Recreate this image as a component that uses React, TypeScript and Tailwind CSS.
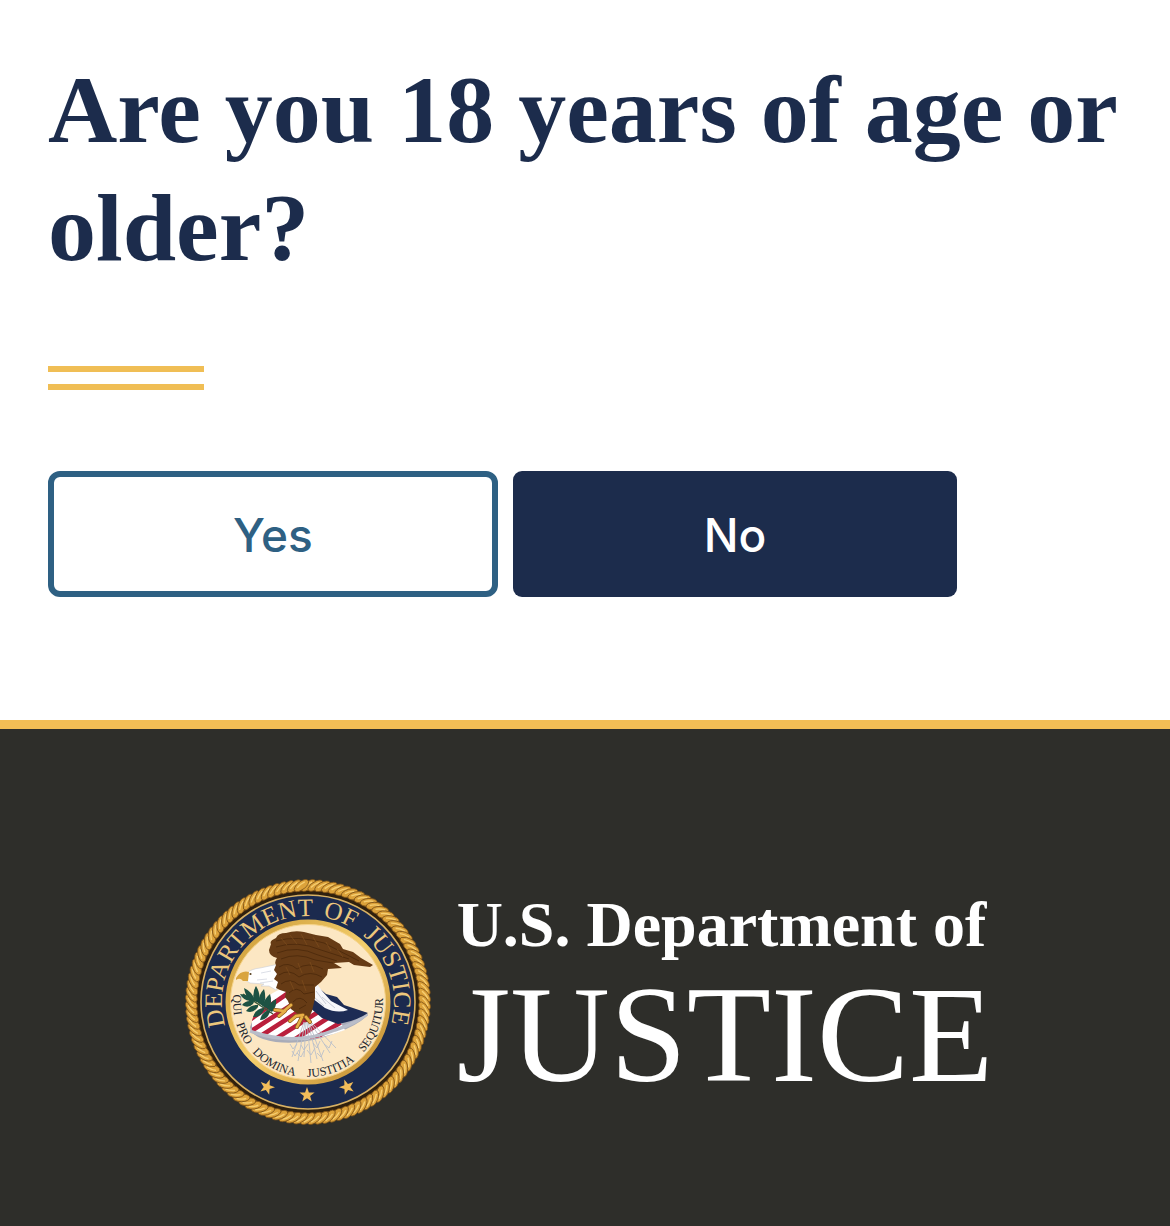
const ropeStrands = Array.from({ length: 104 }, (_, i) => (i * 360) / 104)

const nameWords = [
  { text: 'DEPARTMENT', offset: '0.8%' },
  { text: 'OF', offset: '54.6%' },
  { text: 'JUSTICE', offset: '68.4%' },
]

const mottoWords = [
  { text: 'QUI', offset: '9.4%' },
  { text: 'PRO', offset: '20.4%' },
  { text: 'DOMINA', offset: '36.6%' },
  { text: 'JUSTITIA', offset: '58.8%' },
  { text: 'SEQUITUR', offset: '82.6%' },
]

const stars = [
  { x: 82, y: 208, turn: 20 },
  { x: 122, y: 216, turn: 0 },
  { x: 162, y: 208, turn: -20 },
]

const leaves = [
  'M66 124 Q60 116 59 109 Q68 113 70 122Z',
  'M69 122 Q67 113 71 107 Q76 115 74 124Z',
  'M73 124 Q74 115 79 110 Q82 119 78 127Z',
  'M77 127 Q80 119 85 115 Q88 124 83 130Z',
  'M82 130 Q85 123 91 120 Q92 128 87 133Z',
  'M65 122 Q58 121 55 115 Q63 115 68 121Z',
  'M68 125 Q63 130 57 126 Q62 120 69 123Z',
  'M73 128 Q68 135 61 132 Q66 125 73 126Z',
  'M79 131 Q75 139 68 138 Q71 129 79 129Z',
  'M85 133 Q82 141 75 141 Q77 132 85 131Z',
]

const talons =
  'M106 126 L99 132 L90 131 M100 132 L94 137 M118 136 L111 137 L105 142 M117 138 L112 148 M121 138 L125 143'

function Seal() {
  return (
    <svg viewBox="0 0 246 246" role="img" aria-label="Department of Justice seal" className="w-[246px] shrink-0">
      <defs>
        <path id="name-arc" d="M41.1 149.2 A86 86 0 1 1 204.9 149.2" />
        <path id="motto-arc" d="M51.7 99.8 A75 75 0 1 0 194.3 99.8" />
        <linearGradient id="gold" x1="0" y1="0" x2="1" y2="1">
          <stop offset="0" stopColor="#c99733" />
          <stop offset="0.5" stopColor="#f4ce6c" />
          <stop offset="1" stopColor="#bd862b" />
        </linearGradient>
        <clipPath id="shield">
          <path d="M67 141 Q77 116 97 110 L131 110 L154 141 L160 151 Q112 170 67 152Z" />
        </clipPath>
      </defs>

      {/* Rope border */}
      <circle cx="123" cy="123" r="116" fill="#2f200e" stroke="#6b4617" strokeWidth="10" />
      {ropeStrands.map((angle) => (
        <g key={angle} transform={`rotate(${angle} 123 123)`}>
          <path d="M116 10 Q117 5 124 1.5 Q130 -1 131 3 Q130 8 123 11 Q117 14 116 10Z" fill="#dca23a" stroke="#7d5218" strokeWidth="0.8" />
          <path d="M119 8.5 Q122 5 127 3" fill="none" stroke="#f5cd70" strokeWidth="1.4" />
        </g>
      ))}

      {/* Rings */}
      <circle cx="123" cy="123" r="107" fill="#1b2a4e" stroke="#d8b163" strokeWidth="1.6" />
      <circle cx="123" cy="123" r="80" fill="#fce7c3" stroke="url(#gold)" strokeWidth="5" />
      <circle cx="123" cy="123" r="77.5" fill="none" stroke="#f7d48b" strokeWidth="1" />

      {nameWords.map(({ text, offset }) => (
        <text key={text} fill="#ecc77c" className="font-['Liberation_Serif',serif] text-[25px]">
          <textPath href="#name-arc" startOffset={offset}>{text}</textPath>
        </text>
      ))}
      {mottoWords.map(({ text, offset }) => (
        <text key={text} fill="#20242c" textAnchor="middle" className="font-['Liberation_Serif',serif] text-[12px]">
          <textPath href="#motto-arc" startOffset={offset}>{text}</textPath>
        </text>
      ))}

      {stars.map(({ x, y, turn }) => (
        <path
          key={x}
          transform={`translate(${x} ${y}) rotate(${turn})`}
          d="M0 -8 L1.9 -2.5 L7.6 -2.5 L3.1 1 L4.7 6.5 L0 3.2 L-4.7 6.5 L-3.1 1 L-7.6 -2.5 L-1.9 -2.5Z"
          fill="#f2bd5a"
        />
      ))}

      {/* Shield */}
      <path d="M65 148 Q66 156 78 160 Q110 170 151 154 Q172 147 183 136 L181 133 Q130 150 67 143Z" fill="#a9acb8" />
      <g clipPath="url(#shield)">
        <path d="M60 100 H165 V165 H60Z" fill="#fff" />
        <path d="M60 144 L112 108 M60 156 L122 116 M68 162 L130 122 M84 164 L138 130 M101 166 L146 137 M119 166 L158 142" stroke="#ba1f3c" strokeWidth="4.6" />
      </g>
      <path d="M65 152 Q108 168 150 151 Q170 145 182 135" fill="none" stroke="#b9bdc9" strokeWidth="3.4" />
      <path d="M128 104 L141 115 L152 118 L159 126 L183 134 Q171 142 153 145 L137 139 L124 128Z" fill="#1d2c55" />
      <path d="M129 101 L138 113 L146 122 L163 131 Q152 135 140 129 L127 119 L125 108Z" fill="#f7f7fa" />
      <path d="M131 112 L141 125 M137 118 L150 129 M129 118 L139 127" stroke="#b4b9c8" strokeWidth="0.7" />

      {/* Arrows */}
      <g fill="none" stroke="#babfc9" strokeWidth="0.9">
        <path d="M119 143 L107 178 M120 143 L113 182 M121 143 L119 178 M122 143 L126 184 M123 143 L132 180 M124 143 L138 182 M125 143 L145 174 M126 143 L151 169" />
        <path d="M105 165 L108 170 L112 165 M112 174 L116 178 L119 172 M122 171 L126 176 L130 169 M132 174 L136 178 L139 171 M139 165 L144 169 L147 162 M107 172 L110 177 L114 171 M116 166 L119 171 L123 165 M128 164 L132 169 L135 162" />
      </g>

      {/* Olive branch */}
      <path d="M58 115 L88 135" stroke="#3c5a3a" strokeWidth="1.5" />
      {leaves.map((d) => (
        <path key={d} d={d} fill="#1d5243" />
      ))}

      {/* Eagle */}
      <path
        d="M94 85 L75 89 Q66 90 62 94 L60 101 L65 104 L79 105 L76 107 L84 107 L91 111 L103 101 L100 86Z"
        fill="#fff"
        stroke="#c9ccd6"
        strokeWidth="0.6"
      />
      <path d="M64 93 Q56 91 51 99 L51 101 Q55 98 58 102 L63 102Z" fill="#d9a43e" />
      <circle cx="65.5" cy="95" r="1.1" fill="#5a421f" />
      <path d="M72 101 L82 100 M75 104 L88 102 M76 94 L86 92" stroke="#cdd1dc" strokeWidth="0.7" />
      <path
        d="M91 86 Q89 83 92 79 Q84 77 84 71 L86 65 Q84 62 91 59 Q93 54 101 54 Q110 51 119 53 L131 56 L143 58 L155 65 L158 70 L168 73 L176 79 L188 86 L185 88 L169 86 L164 83 L149 84 L157 89 L143 90 L142 96 L136 103 L130 108 L130 119 L127 132 L122 143 L115 137 L106 130 L103 122 L100 118 L101 113 L95 111 L91 109 L93 103 L89 100 L92 95 L89 91Z"
        fill="#663b15"
      />
      <g fill="none" stroke="#462508" strokeWidth="0.7">
        <path d="M91 62 Q112 56 139 64 L174 82 M91 68 Q112 61 136 71 L164 80 M92 74 Q112 66 133 76 L152 82 M96 80 Q112 73 130 81 L148 84" />
        <path d="M94 88 Q103 82 112 90 Q123 82 138 90 M94 96 Q104 89 114 98 Q125 91 137 98 M96 105 Q105 98 114 106 L129 106 M104 114 Q112 106 119 115 L129 113 M108 123 Q115 115 122 124 M114 130 L121 126" />
      </g>
      <g fill="none" stroke="#83501f" strokeWidth="0.6">
        <path d="M96 59 L102 66 M105 56 L112 65 M116 55 L122 66 M128 58 L134 68 M141 63 L146 72 M152 70 L158 78 M101 88 L105 96 M113 84 L117 94 M125 83 L129 93 M105 102 L109 111 M117 101 L121 112" />
      </g>

      {/* Talons */}
      <path d={talons} fill="none" stroke="#8c5b1d" strokeWidth="4" strokeLinecap="round" />
      <path d={talons} fill="none" stroke="#e7af46" strokeWidth="2.6" strokeLinecap="round" />
    </svg>
  )
}

export default function App() {
  return (
    <div className="min-h-screen flex flex-col bg-white">
      <main className="px-12 pt-[51px] pb-[123px]">
        <h1 className="font-['Liberation_Serif',serif] text-[96px] leading-[118px] font-bold text-[#1c2c4c]">
          Are you 18 years of age or older?
        </h1>
        <div className="mt-[79px] h-6 w-[156px] border-y-6 border-[#f0be55]" />

        <div className="mt-[81px] flex gap-[15px] font-['Inter',sans-serif] text-[46px] font-medium">
          <button type="button" className="h-[126px] w-[450px] rounded-xl border-6 border-[#2e6083] pt-0.5 text-[#2e6083]">
            Yes
          </button>
          <button type="button" className="h-[126px] w-[444px] rounded-[9px] bg-[#1c2c4c] pt-0.5 text-white">
            No
          </button>
        </div>
      </main>

      <footer className="grow border-t-9 border-[#f3be55] bg-[#2e2e2a] pr-12 pl-14 pt-[150px] pb-[100px]">
        <div className="flex justify-center gap-[26px]">
          <Seal />
          <div className="pt-3 font-['Liberation_Serif',serif] text-white">
            <p className="text-[64px] leading-[68px] font-bold">U.S. Department of</p>
            <p className="text-[138px] leading-[152px]">JUSTICE</p>
          </div>
        </div>
      </footer>
    </div>
  )
}
